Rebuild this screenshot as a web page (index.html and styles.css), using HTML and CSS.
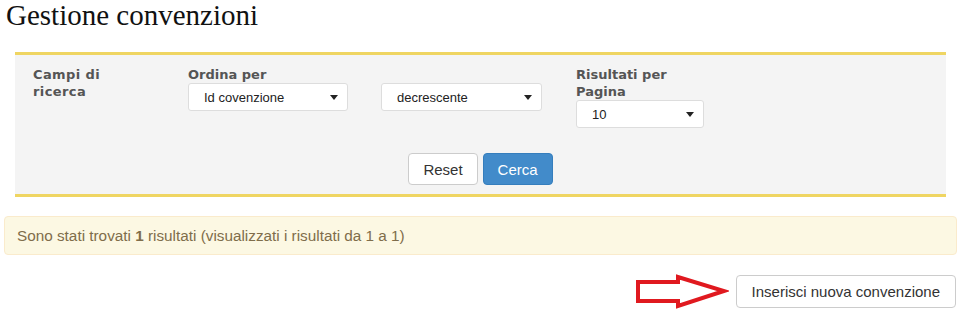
FILE: index.html
```html
<!DOCTYPE html>
<html>
<head>
	<title>Gestione convenzioni</title>
	<meta charset="UTF-8">
	<meta name="viewport" content="width=device-width, initial-scale=1.0">
	<link rel="stylesheet" href="styles.css">
</head>
<body>
	<div class="page">
		<h1>Gestione convenzioni</h1>

		<form class="search-panel">
			<div class="search-fields">
				<div class="field">
					<label class="field-label label-wide">Campi di ricerca</label>
				</div>
				<div class="field">
					<label class="field-label">Ordina per</label>
					<div class="select-wrap select-order">
						<select>
							<option>Id covenzione</option>
						</select>
					</div>
				</div>
				<div class="field">
					<label class="field-label">&nbsp;</label>
					<div class="select-wrap select-dir">
						<select>
							<option>decrescente</option>
						</select>
					</div>
				</div>
				<div class="field">
					<label class="field-label label-narrow">Risultati per Pagina</label>
					<div class="select-wrap select-size">
						<select>
							<option>10</option>
						</select>
					</div>
				</div>
			</div>

			<div class="search-actions">
				<button type="button" class="btn">Reset</button>
				<button type="button" class="btn btn-primary">Cerca</button>
			</div>
		</form>

		<div class="alert">
			Sono stati trovati <b>1</b> risultati (visualizzati i risultati da 1 a 1)
		</div>

		<div class="toolbar">
			<!-- red arrow drawn on the screenshot -->
			<svg class="hint-arrow" width="94" height="36" viewBox="0 0 94 36">
				<path d="M3 8 H43 V3 L89 17 L43 32 V27 H3 Z" fill="#ffffff" stroke="#e0191f" stroke-width="4" stroke-linejoin="miter"/>
			</svg>
			<button type="button" class="btn btn-insert">Inserisci nuova convenzione</button>
		</div>
	</div>
</body>
</html>
```

FILE: styles.css
```css
	body {
		margin: 0;
		background-color: #ffffff;
		font-family: "Liberation Sans", Arial, sans-serif;
		color: #333333;
	}

	.page {
		padding: 0 1px 0 4px;
	}

	h1 {
		font-family: "Liberation Serif", "Times New Roman", serif;
		font-size: 29px;
		font-weight: normal;
		line-height: 30px;
		color: #111111;
		margin: 0 0 22px 2px;
	}

	/* Search panel */
	.search-panel {
		margin: 0 11px;
		background-color: #f4f4f4;
		border-top: 3px solid #efd562;
		border-bottom: 3px solid #efd562;
		padding: 11px 0 9px 18px;
	}

	.search-fields {
		display: grid;
		grid-template-columns: 155px 193px 195px 1fr;
	}

	.field-label {
		display: block;
		font-family: "DejaVu Sans", Verdana, sans-serif;
		font-size: 13px;
		font-weight: bold;
		line-height: 17px;
		color: #555555;
	}

	.label-wide {
		width: 110px;
		letter-spacing: 0.4px;
	}

	.label-narrow {
		width: 128px;
	}

	.select-wrap {
		position: relative;
		height: 28px;
	}

	.select-wrap::after {
		content: "";
		position: absolute;
		top: 12px;
		right: 10px;
		border-left: 4px solid transparent;
		border-right: 4px solid transparent;
		border-top: 5px solid #222222;
		pointer-events: none;
	}

	.select-wrap select {
		appearance: none;
		-webkit-appearance: none;
		width: 100%;
		height: 28px;
		margin: 0;
		padding: 0 24px 0 15px;
		border: 1px solid #dddddd;
		border-radius: 3px;
		background-color: #ffffff;
		font-family: "Liberation Sans", Arial, sans-serif;
		font-size: 13px;
		color: #222222;
	}

	.select-order {
		width: 160px;
	}

	.select-dir {
		width: 161px;
	}

	.select-size {
		width: 128px;
	}

	.search-actions {
		display: flex;
		justify-content: center;
		gap: 5px;
		margin-top: 25px;
		padding-right: 18px;
	}

	/* Buttons */
	.btn {
		height: 32px;
		padding: 0 14px;
		border: 1px solid #cccccc;
		border-radius: 4px;
		background-color: #ffffff;
		font-family: "Liberation Sans", Arial, sans-serif;
		font-size: 15px;
		color: #333333;
		cursor: pointer;
	}

	.btn-primary {
		background-color: #428bca;
		border-color: #357ebd;
		color: #ffffff;
	}

	.btn-insert {
		height: 33px;
		padding: 0 15px;
	}

	/* Result message */
	.alert {
		margin-top: 19px;
		padding: 8px 12px;
		border: 1px solid #faebcc;
		border-radius: 4px;
		background-color: #fcf8e3;
		color: #7f6d4a;
		font-size: 15.3px;
		line-height: 21px;
	}

	.toolbar {
		display: flex;
		justify-content: flex-end;
		align-items: center;
		gap: 7px;
		margin-top: 18px;
		padding-right: 1px;
	}

	.hint-arrow {
		display: block;
		margin-top: 1px;
	}
```
